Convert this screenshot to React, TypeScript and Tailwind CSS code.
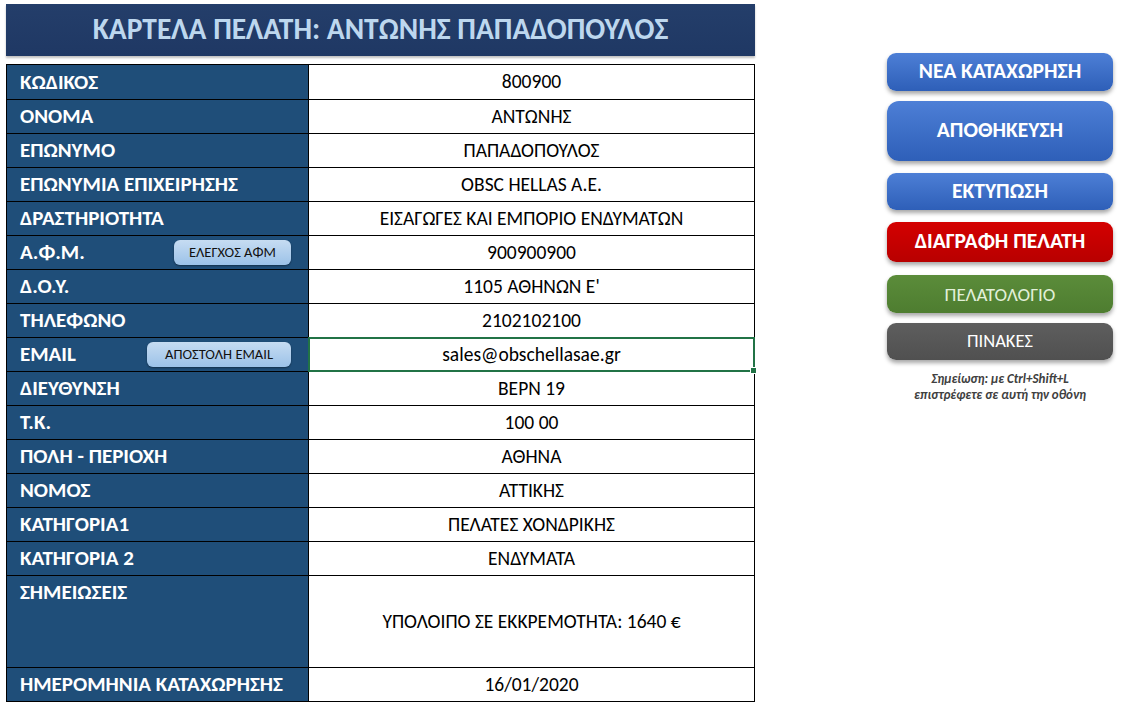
import React from "react";

type Row = { label: string; value: string; h?: string; btn?: string; btnW?: string; selected?: boolean; top?: boolean };

const rows: Row[] = [
  { label: "ΚΩΔΙΚΟΣ", value: "800900" },
  { label: "ΟΝΟΜΑ", value: "ΑΝΤΩΝΗΣ" },
  { label: "ΕΠΩΝΥΜΟ", value: "ΠΑΠΑΔΟΠΟΥΛΟΣ" },
  { label: "ΕΠΩΝΥΜΙΑ ΕΠΙΧΕΙΡΗΣΗΣ", value: "OBSC HELLAS A.E." },
  { label: "ΔΡΑΣΤΗΡΙΟΤΗΤΑ", value: "ΕΙΣΑΓΩΓΕΣ ΚΑΙ ΕΜΠΟΡΙΟ ΕΝΔΥΜΑΤΩΝ" },
  { label: "Α.Φ.Μ.", value: "900900900", btn: "ΕΛΕΓΧΟΣ ΑΦΜ", btnW: "w-[117px]" },
  { label: "Δ.Ο.Υ.", value: "1105 ΑΘΗΝΩΝ Ε'" },
  { label: "ΤΗΛΕΦΩΝΟ", value: "2102102100" },
  { label: "EMAIL", value: "sales@obschellasae.gr", btn: "ΑΠΟΣΤΟΛΗ EMAIL", btnW: "w-[144px]", selected: true },
  { label: "ΔΙΕΥΘΥΝΣΗ", value: "ΒΕΡΝ 19" },
  { label: "Τ.Κ.", value: "100 00" },
  { label: "ΠΟΛΗ - ΠΕΡΙΟΧΗ", value: "ΑΘΗΝΑ" },
  { label: "ΝΟΜΟΣ", value: "ΑΤΤΙΚΗΣ" },
  { label: "ΚΑΤΗΓΟΡΙΑ1", value: "ΠΕΛΑΤΕΣ ΧΟΝΔΡΙΚΗΣ" },
  { label: "ΚΑΤΗΓΟΡΙΑ 2", value: "ΕΝΔΥΜΑΤΑ" },
  { label: "ΣΗΜΕΙΩΣΕΙΣ", value: "ΥΠΟΛΟΙΠΟ ΣΕ ΕΚΚΡΕΜΟΤΗΤΑ: 1640 €", h: "h-[92px]", top: true },
  { label: "ΗΜΕΡΟΜΗΝΙΑ ΚΑΤΑΧΩΡΗΣΗΣ", value: "16/01/2020" },
];

const font = { fontFamily: "Calibri, Carlito, 'Open Sans', 'Noto Sans', sans-serif" };

export default function App() {
  return (
    <div className="w-[1129px] h-[714px] bg-white flex overflow-hidden" style={font}>
      <div className="ml-[6px] mt-[4px] w-[749px] flex flex-col">
        <div className="h-[52px] bg-gradient-to-b from-[#243e6a] to-[#1f3864] flex items-center justify-center shadow-[0_2px_2px_rgba(0,0,0,0.25)]">
          <span className="text-[#bdd7ee] font-bold text-[29.5px] leading-none">
            ΚΑΡΤΕΛΑ ΠΕΛΑΤΗ: ΑΝΤΩΝΗΣ ΠΑΠΑΔΟΠΟΥΛΟΣ
          </span>
        </div>
        <div className="mt-[8px] border border-black flex flex-col">
          {rows.map((r, i) => (
            <div
              key={i}
              className={`flex ${r.h ?? "h-[34px]"} ${i > 0 ? "border-t border-black" : ""}`}
            >
              <div
                className={`w-[302px] shrink-0 bg-[#1f4e79] border-r border-black flex ${r.top ? "items-start pt-[6px]" : "items-center"} justify-between pl-[13px] pr-[17px]`}
              >
                <span className="text-white font-bold text-[21px] leading-none">{r.label}</span>
                {r.btn && (
                  <span
                    className={`${r.btnW} h-[25px] rounded-[6px] bg-gradient-to-b from-[#c6dcf2] to-[#9cc2e8] text-[#111] text-[14.5px] leading-none flex items-center justify-center shadow-[0_1px_2px_rgba(0,0,0,0.4)]`}
                  >
                    {r.btn}
                  </span>
                )}
              </div>
              <div
                className={`relative flex-1 flex items-center justify-center text-black text-[19.5px] leading-none ${r.selected ? "outline-2 outline-[#217346] -outline-offset-1" : ""}`}
              >
                {r.value}
                {r.selected && (
                  <span className="absolute right-[-3px] bottom-[-3px] w-[5px] h-[5px] bg-[#217346] border border-white box-content" />
                )}
              </div>
            </div>
          ))}
        </div>
      </div>
      <div className="ml-[132px] mt-[53px] w-[226px] flex flex-col items-center">
        <Btn cls="h-[38px] bg-gradient-to-b from-[#4d7fd6] to-[#2e5fb8] text-white font-bold text-[21.5px]">ΝΕΑ ΚΑΤΑΧΩΡΗΣΗ</Btn>
        <Btn cls="mt-[10px] h-[60px] rounded-[12px] bg-gradient-to-b from-[#4d7fd6] to-[#2e5fb8] text-white font-bold text-[21.5px]">ΑΠΟΘΗΚΕΥΣΗ</Btn>
        <Btn cls="mt-[12px] h-[37px] bg-gradient-to-b from-[#4d7fd6] to-[#2e5fb8] text-white font-bold text-[21.5px]">ΕΚΤΥΠΩΣΗ</Btn>
        <Btn cls="mt-[12px] h-[40px] bg-gradient-to-b from-[#d40000] to-[#b80000] text-white font-bold text-[21.5px]">ΔΙΑΓΡΑΦΗ ΠΕΛΑΤΗ</Btn>
        <Btn cls="mt-[13px] h-[38px] bg-gradient-to-b from-[#5b8c3a] to-[#4e7d30] text-[#e2f0d9] text-[19px]">ΠΕΛΑΤΟΛΟΓΙΟ</Btn>
        <Btn cls="mt-[10px] h-[37px] bg-gradient-to-b from-[#5e5e5e] to-[#505050] text-white text-[18.5px]">ΠΙΝΑΚΕΣ</Btn>
        <div className="mt-[11px] text-center text-[#404040] italic font-semibold text-[13px] leading-[16px]">
          Σημείωση: με Ctrl+Shift+L
          <br />
          επιστρέφετε σε αυτή την οθόνη
        </div>
      </div>
    </div>
  );
}

function Btn({ cls, children }: { cls: string; children: React.ReactNode }) {
  return (
    <div
      className={`w-[226px] rounded-[9px] flex items-center justify-center leading-none shadow-[0_3px_4px_rgba(0,0,0,0.35)] ${cls}`}
    >
      {children}
    </div>
  );
}
